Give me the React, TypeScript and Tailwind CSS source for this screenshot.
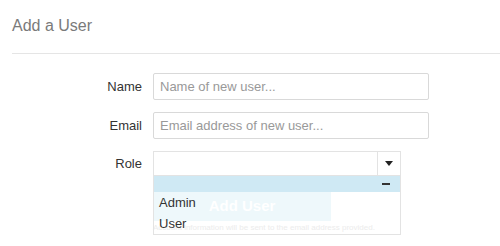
import React from "react";

export default function App() {
  return (
    <div className="w-[500px] h-[246px] bg-white overflow-hidden font-['Liberation_Sans',Arial,sans-serif]">
      <div className="ml-3 h-[54px] border-b border-[#e5e5e5] pt-[16px]">
        <h1 className="text-[16px] leading-[20px] text-[#7a7a7a] font-normal">Add a User</h1>
      </div>
      <div className="pt-[19px] flex flex-col">
        <div className="flex items-center">
          <label className="w-[142px] text-right text-[13px] text-[#333]">Name</label>
          <input
            className="ml-[11px] w-[276px] h-[27px] border border-[#d9d9d9] rounded-[2px] px-[6px] text-[13px] text-[#333] placeholder:text-[#999] outline-none"
            placeholder="Name of new user..."
          />
        </div>
        <div className="flex items-center mt-[12px]">
          <label className="w-[142px] text-right text-[13px] text-[#333]">Email</label>
          <input
            className="ml-[11px] w-[276px] h-[27px] border border-[#d9d9d9] rounded-[2px] px-[6px] text-[13px] text-[#333] placeholder:text-[#999] outline-none"
            placeholder="Email address of new user..."
          />
        </div>
        <div className="flex items-start mt-[12px]">
          <label className="w-[142px] text-right text-[13px] text-[#333] leading-[25px]">Role</label>
          <div className="ml-[11px] w-[248px] relative">
            <div className="h-[25px] border border-[#e3e3e3] flex">
              <div className="flex-1" />
              <div className="w-[23px] border-l border-[#e3e3e3] flex items-center justify-center">
                <svg width="8" height="5" viewBox="0 0 8 5">
                  <path d="M0 0 H8 L4 5 Z" fill="#222" />
                </svg>
              </div>
            </div>
            <div className="flex flex-col">
              <div className="w-[178px] h-[29px] mt-[16px] bg-[#eef8fb] flex items-center justify-center text-white text-[15px] font-bold">
                Add User
              </div>
              <p className="mt-[2px] text-[8px] leading-[10px] text-[#ececec] whitespace-nowrap">
                Account information will be sent to the email address provided.
              </p>
            </div>
            <div className="absolute left-0 top-[25px] w-[248px] h-[59px] border border-t-0 border-[#e3e3e3]">
              <div className="h-[16px] bg-[#cfe9f4] flex items-center justify-end pr-[10px]">
                <div className="w-[8px] h-[2px] bg-[#333]" />
              </div>
              <div className="pl-[5px] text-[13px] text-[#333] leading-[21px]">Admin</div>
              <div className="pl-[5px] text-[13px] text-[#333] leading-[21px]">User</div>
            </div>
          </div>
        </div>
      </div>
    </div>
  );
}
